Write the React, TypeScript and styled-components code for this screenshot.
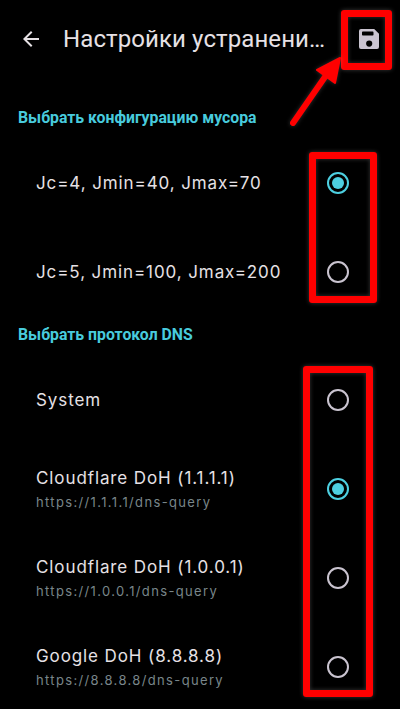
import React from "react";
import styled, { createGlobalStyle } from "styled-components";

const Global = createGlobalStyle`
  html, body { margin: 0; padding: 0; background: #000; }
  body { font-family: Roboto, "Noto Sans", sans-serif; }
`;

const Page = styled.div`
  position: relative;
  width: 400px;
  height: 709px;
  overflow: hidden;
  background: #000;
  display: flex;
  flex-direction: column;
`;

const TopBar = styled.header`
  display: flex;
  align-items: center;
  height: 78px;
  padding-left: 19px;
  padding-right: 21px;
  flex: none;
`;

const BackButton = styled.div`
  width: 24px;
  height: 24px;
  display: flex;
  color: #e6e1e5;
  margin-right: 20px;
  flex: none;
`;

const Title = styled.h1`
  margin: 0;
  font-size: 24px;
  font-weight: 400;
  line-height: 32px;
  letter-spacing: 0.1px;
  color: #e6e1e5;
  white-space: nowrap;
  flex: none;
`;

const SaveButton = styled.div`
  width: 20px;
  height: 20px;
  display: flex;
  color: #cac4d0;
  margin-left: auto;
  flex: none;
`;

const Content = styled.main`
  padding-top: 21px;
  display: flex;
  flex-direction: column;
  font-family: Inter, Roboto, sans-serif;
`;

const SectionTitle = styled.h2`
  margin: 0;
  height: 39px;
  line-height: 38px;
  padding-left: 18px;
  font-family: Roboto, sans-serif;
  font-size: 15.8px;
  font-weight: 700;
  color: #48cbdd;
  white-space: nowrap;
`;

const Row = styled.div`
  display: flex;
  align-items: center;
  justify-content: space-between;
  height: 89px;
  padding-left: 36px;
  padding-right: 51px;
`;

const Labels = styled.div`
  display: flex;
  flex-direction: column;
  gap: 4px;
`;

const Label = styled.div`
  font-size: 17px;
  line-height: 24px;
  letter-spacing: 0.9px;
  color: #e6e1e5;
  white-space: nowrap;
`;

const Hint = styled.div`
  font-size: 13px;
  line-height: 16px;
  letter-spacing: 1.35px;
  color: #79868a;
  white-space: nowrap;
  margin-bottom: 1px;
`;

const Radio = styled.div<{ $on?: boolean }>`
  box-sizing: border-box;
  width: 22px;
  height: 22px;
  border-radius: 50%;
  border: 2px solid ${(p) => (p.$on ? "#4dd0e1" : "#cac4d0")};
  display: flex;
  align-items: center;
  justify-content: center;
  flex: none;
  &::after {
    content: "";
    display: ${(p) => (p.$on ? "block" : "none")};
    width: 12px;
    height: 12px;
    border-radius: 50%;
    background: #4dd0e1;
  }
`;

const Highlight = styled.div<{ $x: number; $y: number; $w: number; $h: number }>`
  position: absolute;
  box-sizing: border-box;
  left: ${(p) => p.$x}px;
  top: ${(p) => p.$y}px;
  width: ${(p) => p.$w}px;
  height: ${(p) => p.$h}px;
  border: 7px solid #ff0000;
  border-radius: 3px;
  box-shadow: 0 0 4px rgba(255, 255, 255, 0.22), inset 0 0 4px rgba(255, 255, 255, 0.22);
`;

const Arrow = styled.svg`
  position: absolute;
  left: 280px;
  top: 50px;
  width: 70px;
  height: 80px;
  filter: drop-shadow(0 0 2px rgba(255, 255, 255, 0.2));
`;

type Item = { label: string; hint?: string; on?: boolean };

const junk: Item[] = [
  { label: "Jc=4, Jmin=40, Jmax=70", on: true },
  { label: "Jc=5, Jmin=100, Jmax=200" },
];

const dns: Item[] = [
  { label: "System" },
  { label: "Cloudflare DoH (1.1.1.1)", hint: "https://1.1.1.1/dns-query", on: true },
  { label: "Cloudflare DoH (1.0.0.1)", hint: "https://1.0.0.1/dns-query" },
  { label: "Google DoH (8.8.8.8)", hint: "https://8.8.8.8/dns-query" },
];

const Option = ({ label, hint, on }: Item) => (
  <Row>
    <Labels>
      <Label>{label}</Label>
      {hint && <Hint>{hint}</Hint>}
    </Labels>
    <Radio $on={on} />
  </Row>
);

export default function App() {
  return (
    <Page>
      <Global />
      <TopBar>
        <BackButton>
          <svg width="24" height="24" viewBox="0 0 24 24" fill="currentColor">
            <path d="M20 11H7.83l5.59-5.59L12 4l-8 8 8 8 1.41-1.41L7.83 13H20v-2z" />
          </svg>
        </BackButton>
        <Title>Настройки устранени…</Title>
        <SaveButton>
          <svg width="20" height="20" viewBox="0 0 20 20" fill="currentColor">
            <path
              fillRule="evenodd"
              d="M2 0H15.2L20 4.8V18a2 2 0 0 1-2 2H2a2 2 0 0 1-2-2V2a2 2 0 0 1 2-2zM3.8 2.6a.8.8 0 0 0-.8.8V5.8a.8.8 0 0 0 .8.8H13.7a.8.8 0 0 0 .8-.8V3.4a.8.8 0 0 0-.8-.8zM10.2 11.5a3.1 3.1 0 1 0 0 6.2 3.1 3.1 0 0 0 0-6.2z"
            />
          </svg>
        </SaveButton>
      </TopBar>
      <Content>
        <SectionTitle>Выбрать конфигурацию мусора</SectionTitle>
        {junk.map((o) => (
          <Option key={o.label} {...o} />
        ))}
        <SectionTitle>Выбрать протокол DNS</SectionTitle>
        {dns.map((o) => (
          <Option key={o.label} {...o} />
        ))}
      </Content>
      <Highlight $x={341} $y={10} $w={51} $h={60} />
      <Highlight $x={309} $y={152} $w={68} $h={151} />
      <Highlight $x={303} $y={366} $w={70} $h={331} />
      <Arrow viewBox="0 0 70 80">
        <path
          d="M13 73 L47 24"
          stroke="#ff0000"
          strokeWidth="6"
          strokeLinecap="round"
          fill="none"
        />
        <path d="M60 8 L37 20 L55 33 Z" fill="#ff0000" stroke="#ff0000" strokeWidth="2" strokeLinejoin="round" />
      </Arrow>
    </Page>
  );
}
